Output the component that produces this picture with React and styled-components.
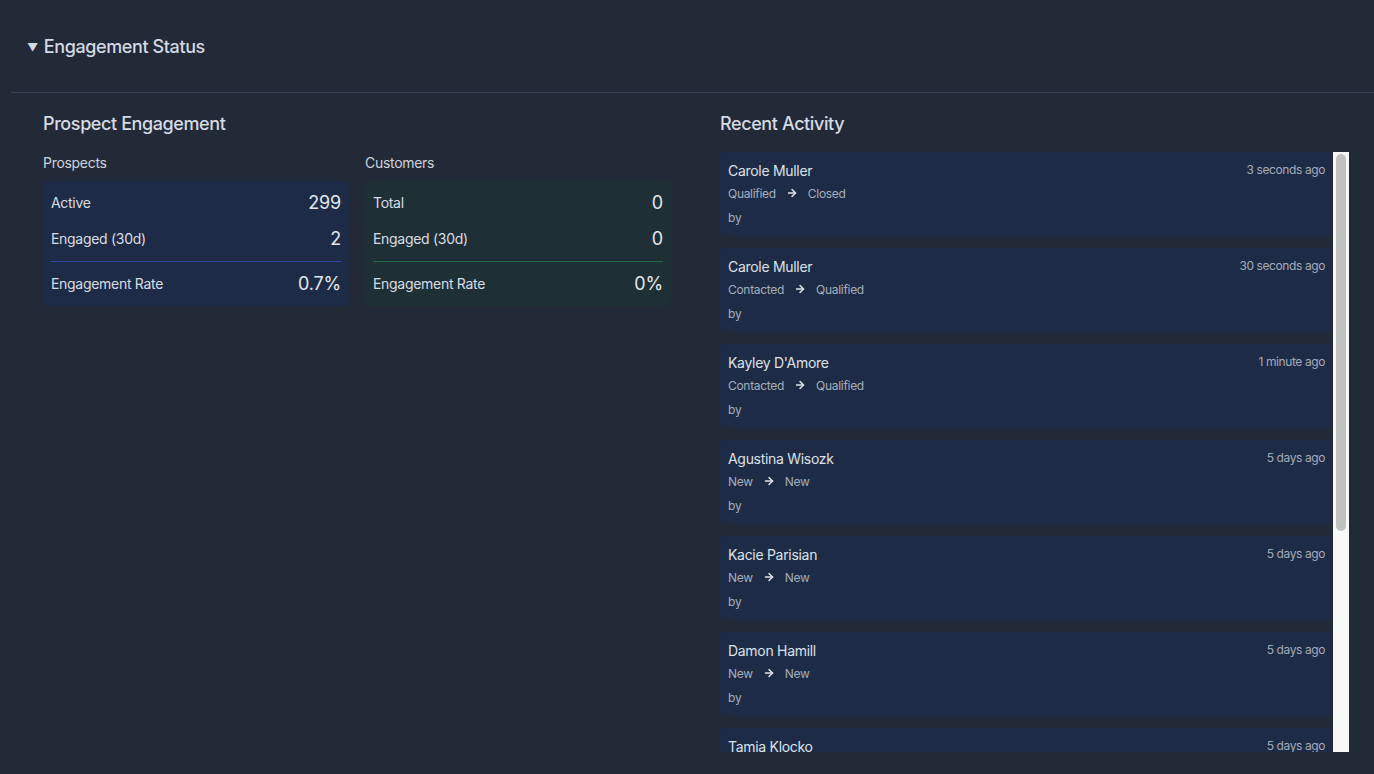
import React from "react";
import styled, { createGlobalStyle } from "styled-components";
import { ArrowRight } from "lucide-react";

const Global = createGlobalStyle`
  html, body { margin: 0; padding: 0; background: #222937; }
  body { font-family: Inter, "Noto Sans", sans-serif; color: #d5dae2; }
  * { box-sizing: border-box; }
`;

const Page = styled.div`
  min-height: 774px;
  padding-left: 11px;
  background: #222937;
`;

const Details = styled.details`
  display: block;
`;

const Summary = styled.summary`
  list-style: none;
  display: flex;
  align-items: center;
  gap: 6px;
  height: 93px;
  padding-left: 16px;
  padding-top: 1px;
  border-bottom: 1px solid #394152;
  font-size: 18px;
  font-weight: 500;
  letter-spacing: -0.4px;
  color: #d3d9e2;
  cursor: pointer;
  &::-webkit-details-marker { display: none; }
`;

const Caret = styled.span`
  font-size: 11px;
  color: #d3d9e2;
  margin-top: 1px;
`;

const Body = styled.div`
  display: grid;
  grid-template-columns: 628px 629px;
  column-gap: 49px;
  padding: 17px 25px 0 32px;
`;

const Column = styled.section`
  display: flex;
  flex-direction: column;
`;

const Heading = styled.h2`
  margin: 0 0 ${(p) => (p.$tight ? 16 : 17)}px;
  height: 26px;
  padding-top: 1px;
  line-height: 25px;
  font-size: 18px;
  font-weight: 500;
  letter-spacing: -0.4px;
  color: #d5dbe4;
`;

const StatGrid = styled.div`
  display: grid;
  grid-template-columns: 306px 306px;
  column-gap: 16px;
`;

const Group = styled.div`
  display: flex;
  flex-direction: column;
`;

const GroupLabel = styled.div`
  font-size: 14px;
  line-height: 20px;
  letter-spacing: -0.3px;
  color: #cdd3dc;
  margin-bottom: 8px;
`;

const StatBox = styled.div`
  background: ${(p) => (p.$tone === "green" ? "#1e3035" : "#1e2b46")};
  border-radius: 4px;
  padding: 3px 8px 5px;
  display: flex;
  flex-direction: column;
`;

const StatRow = styled.div`
  display: flex;
  justify-content: space-between;
  align-items: center;
  height: 36px;
`;

const Divider = styled.div`
  height: 1px;
  margin: 5px 0 3px;
  background: ${(p) => (p.$tone === "green" ? "#1f6a44" : "#2d44a0")};
`;

const StatLabel = styled.span`
  font-size: 14px;
  letter-spacing: -0.3px;
  color: #d8dde5;
`;

const StatValue = styled.span`
  font-size: 18px;
  letter-spacing: -0.2px;
  color: #e3e7ed;
`;

const FeedFrame = styled.div`
  display: flex;
  height: 600px;
`;

const Feed = styled.div`
  flex: 1;
  overflow-y: auto;
  scrollbar-width: none;
  display: flex;
  flex-direction: column;
  gap: 12px;
  &::-webkit-scrollbar { display: none; }
`;

const ScrollTrack = styled.div`
  flex: none;
  width: 16px;
  margin-left: 1px;
  background: #f8f8f8;
  padding: 2px 3px;
`;

const ScrollThumb = styled.div`
  width: 100%;
  background: #c1c1c1;
  border-radius: 5px;
`;

const Card = styled.div`
  flex: none;
  height: 84px;
  background: #1e2b46;
  border-radius: 4px;
  padding: 8px 7px 8px 8px;
  display: flex;
  flex-direction: column;
`;

const CardTop = styled.div`
  display: flex;
  justify-content: space-between;
  align-items: center;
  height: 20px;
`;

const Name = styled.span`
  font-size: 14px;
  letter-spacing: -0.3px;
  color: #dde2ea;
`;

const Time = styled.span`
  font-size: 12px;
  letter-spacing: -0.4px;
  color: #a3abb8;
  margin-top: -1px;
`;

const Transition = styled.div`
  display: flex;
  align-items: center;
  gap: 10px;
  height: 18px;
  margin-top: 4px;
  font-size: 12px;
  letter-spacing: -0.3px;
  color: #a6aebb;
  svg { color: #dfe3ea; }
`;

const By = styled.div`
  font-size: 12px;
  color: #a6aebb;
  height: 18px;
  margin-top: 8px;
`;

const activity = [
  ["Carole Muller", "Qualified", "Closed", "3 seconds ago"],
  ["Carole Muller", "Contacted", "Qualified", "30 seconds ago"],
  ["Kayley D'Amore", "Contacted", "Qualified", "1 minute ago"],
  ["Agustina Wisozk", "New", "New", "5 days ago"],
  ["Kacie Parisian", "New", "New", "5 days ago"],
  ["Damon Hamill", "New", "New", "5 days ago"],
  ["Tamia Klocko", "New", "New", "5 days ago"],
  ["Jerrod Kuhn", "New", "New", "5 days ago"],
  ["Lela Bosco", "New", "New", "5 days ago"],
  ["Murl Schaden", "New", "New", "5 days ago"],
];

const VIEW = 600;
const contentHeight = activity.length * 84 + (activity.length - 1) * 12;
const thumbHeight = Math.round((VIEW * (VIEW - 4)) / contentHeight);

function Stats({ label, tone, rows, rate }) {
  return (
    <Group>
      <GroupLabel>{label}</GroupLabel>
      <StatBox $tone={tone}>
        {rows.map(([k, v]) => (
          <StatRow key={k}>
            <StatLabel>{k}</StatLabel>
            <StatValue>{v}</StatValue>
          </StatRow>
        ))}
        <Divider $tone={tone} />
        <StatRow>
          <StatLabel>Engagement Rate</StatLabel>
          <StatValue>{rate}</StatValue>
        </StatRow>
      </StatBox>
    </Group>
  );
}

export default function App() {
  return (
    <>
      <Global />
      <Page>
        <Details open>
          <Summary>
            <Caret>▼</Caret>
            Engagement Status
          </Summary>
          <Body>
            <Column>
              <Heading>Prospect Engagement</Heading>
              <StatGrid>
                <Stats
                  label="Prospects"
                  tone="blue"
                  rows={[["Active", "299"], ["Engaged (30d)", "2"]]}
                  rate="0.7%"
                />
                <Stats
                  label="Customers"
                  tone="green"
                  rows={[["Total", "0"], ["Engaged (30d)", "0"]]}
                  rate="0%"
                />
              </StatGrid>
            </Column>
            <Column>
              <Heading $tight>Recent Activity</Heading>
              <FeedFrame>
                <Feed>
                  {activity.map(([name, from, to, time], i) => (
                    <Card key={i}>
                      <CardTop>
                        <Name>{name}</Name>
                        <Time>{time}</Time>
                      </CardTop>
                      <Transition>
                        <span>{from}</span>
                        <ArrowRight size={12} strokeWidth={3} />
                        <span>{to}</span>
                      </Transition>
                      <By>by</By>
                    </Card>
                  ))}
                </Feed>
                <ScrollTrack aria-hidden="true">
                  <ScrollThumb style={{ height: thumbHeight }} />
                </ScrollTrack>
              </FeedFrame>
            </Column>
          </Body>
        </Details>
      </Page>
    </>
  );
}
